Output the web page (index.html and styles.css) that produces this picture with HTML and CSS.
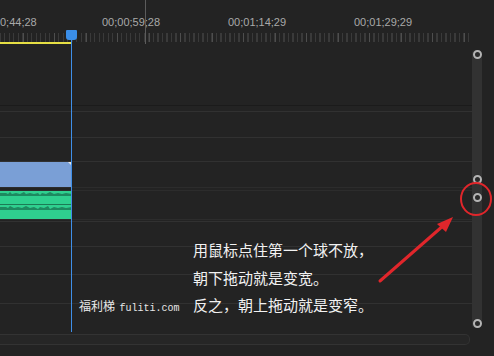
FILE: index.html
```html
<!DOCTYPE html>
<html lang="zh">
<head>
<meta charset="utf-8">
<link rel="stylesheet" href="styles.css">
</head>
<body>
<div class="app">
  <div class="main">
    <div class="ruler">
      <div class="codes">
        <span class="code first">0;44;28</span>
        <span class="code">00;00;59;28</span>
        <span class="code">00;01;14;29</span>
        <span class="code">00;01;29;29</span>
      </div>
      <div class="ticks"></div>
      <div class="work"></div>
      <div class="mark"></div>
    </div>
    <div class="tracks">
      <div class="row r1"></div>
      <div class="row r2"></div>
      <div class="row r3"></div>
      <div class="row r4"></div>
      <div class="row video"><div class="vclip"></div></div>
      <div class="row r6"></div>
      <div class="row audio">
        <div class="aclip">
          <svg width="72" height="28" viewBox="0 0 72 28">
            <rect x="0" y="0" width="72" height="13" fill="#2fd08f"/>
            <rect x="0" y="14" width="72" height="14" fill="#2fd08f"/>
            <rect x="0" y="13" width="72" height="1" fill="#1c7a55"/>
            <path d="M0 2 L6 2 L8 3 L10 1 L12 3 L16 2 L20 3 L24 1 L26 3 L30 2 L34 3 L38 2 L40 4 L42 2 L46 3 L50 1 L54 3 L58 2 L62 3 L66 2 L72 3 L72 5 L0 5 Z" fill="#1d8a60"/>
            <path d="M0 16 L6 16 L8 17 L10 15 L14 17 L18 16 L22 17 L26 15 L30 17 L34 16 L38 18 L40 16 L44 17 L48 15 L50 18 L54 16 L58 17 L62 16 L66 17 L72 16 L72 19 L0 19 Z" fill="#1d8a60"/>
          </svg>
        </div>
      </div>
      <div class="row r8"></div>
      <div class="row r9"></div>
      <div class="row r10"></div>
      <div class="row r11"></div>
      <div class="row r12"></div>
    </div>
    <div class="hscroll"></div>
  </div>
  <div class="side">
    <div class="vtrack">
      <span class="knob"></span>
      <span class="seg s1"></span>
      <span class="knob"></span>
      <span class="seg s2"></span>
      <span class="knob"></span>
      <span class="seg s3"></span>
      <span class="knob"></span>
    </div>
  </div>

  <div class="playhead">
    <div class="ph-head"></div>
    <div class="ph-line"></div>
  </div>

  <div class="note">
    <p>用鼠标点住第一个球不放，</p>
    <p>朝下拖动就是变宽。</p>
    <p>反之，朝上拖动就是变窄。</p>
  </div>
  <div class="wm"><span class="wm-cn">福利梯</span> <span class="wm-en">fuliti.com</span></div>

  <svg class="annot" width="494" height="356" viewBox="0 0 494 356">
    <ellipse cx="476" cy="199" rx="15" ry="16" fill="none" stroke="#e0262b" stroke-width="2"/>
    <line x1="380" y1="281" x2="444" y2="225" stroke="#e0262b" stroke-width="3" stroke-linecap="round"/>
    <polygon points="453,217 437,224 446,232" fill="#e0262b"/>
  </svg>
</div>
</body>
</html>
```
FILE: styles.css
```css
* { box-sizing: border-box; margin: 0; padding: 0; }
html, body { width: 494px; height: 356px; overflow: hidden; background: #232323; }
body { font-family: "Liberation Sans", "Noto Sans CJK SC", sans-serif; }

.app { position: relative; display: flex; width: 494px; height: 356px; background: #232323; }

.main { width: 472px; display: flex; flex-direction: column; }

.ruler { position: relative; height: 45px; }
.codes { display: flex; padding-top: 15px; height: 30px; }
.code { width: 126px; flex: none; font-size: 11px; line-height: 14px; color: #a9a9a9; }
.code.first { width: 102px; }
.ticks {
  height: 9px; width: 470px; margin-top: 3px;
  background:
    repeating-linear-gradient(to right, transparent 0 23px, #4e4e4e 23px 24px, transparent 24px 31.5px),
    repeating-linear-gradient(to right, #3a3a3a 0 1px, transparent 1px 4.5px);
}
.work { position: absolute; left: 0; top: 42px; width: 72px; height: 2px; background: #e6df44; }
.mark { position: absolute; left: 145px; top: 0; width: 1px; height: 44px; background: #5c5c5c; }

.tracks { display: flex; flex-direction: column; }
.row { flex: none; border-bottom: 1px solid #313131; }
.r1 { height: 61px; border-bottom-color: #1b1b1b; }
.r2 { height: 6px; }
.r3 { height: 26px; }
.r4 { height: 24px; }
.video { height: 26px; border-bottom-color: #2c2c2c; }
.vclip { position: relative; width: 72px; height: 25px; background: #7a9fd6; }
.vclip::after { content: ""; position: absolute; right: 0; top: 0; border-top: 4px solid #e8e8e8; border-left: 4px solid transparent; }
.r6 { height: 3px; border-bottom-color: #2c2c2c; }
.audio { height: 29px; border-bottom-color: #2c2c2c; }
.aclip { width: 72px; height: 28px; }
.aclip svg { display: block; }
.r8 { height: 2px; }
.r9 { height: 25px; }
.r10 { height: 28px; }
.r11 { height: 29px; }
.r12 { height: 30px; border-bottom: none; }

.hscroll { height: 11px; width: 470px; border: 1px solid #333; border-left: none; border-radius: 0 5px 5px 0; background: #262626; }

.side { width: 22px; padding-top: 50px; }
.vtrack { width: 10px; display: flex; flex-direction: column; align-items: center; background: #323232; height: 278px; border-radius: 4px; }
.knob { flex: none; width: 9px; height: 9px; border: 2px solid #b4b4b4; border-radius: 50%; background: #2a2a2a; }
.seg { flex: none; width: 10px; }
.s1 { height: 116px; }
.s2 { height: 9px; }
.s3 { height: 117px; }

.playhead { position: absolute; left: 66px; top: 30px; width: 11px; display: flex; flex-direction: column; align-items: center; }
.ph-head { width: 11px; height: 10px; background: #3a8ee8; border-radius: 1px 1px 3px 3px; }
.ph-line { width: 1px; height: 292px; background: #3f8fe8; }

.note { position: absolute; left: 193px; top: 236px; font-family: "Noto Sans CJK SC", sans-serif; font-size: 15px; line-height: 27.5px; color: #f2f2f2; }
.wm { position: absolute; left: 79px; top: 298px; color: #e8e8e8; line-height: 16px; white-space: nowrap; }
.wm-cn { font-family: "Noto Sans CJK SC", sans-serif; font-size: 12px; }
.wm-en { font-family: "Liberation Mono", monospace; font-size: 10px; }

.annot { position: absolute; left: 0; top: 0; pointer-events: none; }
```
